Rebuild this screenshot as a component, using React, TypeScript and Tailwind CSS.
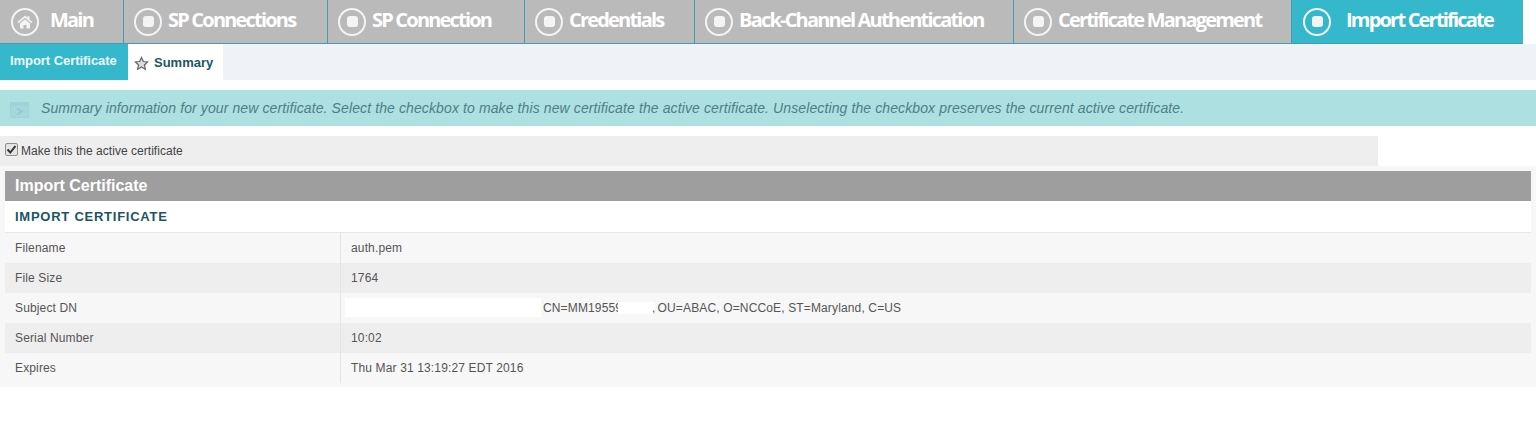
const tabs = [
  { label: "SP Connections", width: "w-[204px]" },
  { label: "SP Connection", width: "w-[197px]" },
  { label: "Credentials", width: "w-[170px]" },
  { label: "Back-Channel Authentication", width: "w-[319px]" },
  { label: "Certificate Management", width: "w-[278px]" },
];

const rows = [
  { name: "Filename", value: "auth.pem" },
  { name: "File Size", value: "1764" },
  { name: "Subject DN", value: "" },
  { name: "Serial Number", value: "10:02" },
  { name: "Expires", value: "Thu Mar 31 13:19:27 EDT 2016" },
];

const StepIcon = () => (
  <span className="w-[28px] h-[28px] shrink-0 rounded-full border-[2px] border-[#f4f4f4] flex items-center justify-center">
    <span className="w-[11px] h-[11px] rounded-[3px] bg-[#f4f4f4]" />
  </span>
);

const NavLabel = ({ children }: { children: string }) => (
  <span className="font-['Open_Sans',sans-serif] text-[20px] font-bold text-white tracking-[-1.8px] whitespace-nowrap pb-[4px]">
    {children}
  </span>
);

export default function App() {
  return (
    <div className="w-[1536px] h-[429px] bg-white font-['Liberation_Sans',Arial,sans-serif] overflow-hidden">
      <div className="flex h-[44px] w-[1523px] border-b border-[#3f9fb0]">
        <div className="w-[124px] bg-[#bababa] border-r border-[#3f9fb0] flex items-center pl-[11px] gap-[11px]">
          <span className="w-[28px] h-[28px] rounded-full border-[2px] border-[#f4f4f4] flex items-center justify-center">
            <svg width="16" height="14" viewBox="0 0 16 14">
              <path d="M8 0.500L0.500 7l1 1.200L8 2.700l6.500 5.500 1-1.200-3-2.600V1.200h-2v1.500z" fill="#f4f4f4" />
              <path d="M3 8.500L8 4.200l5 4.300V13.500H9.500V10h-3v3.500H3z" fill="#f4f4f4" />
            </svg>
          </span>
          <NavLabel>Main</NavLabel>
        </div>
        {tabs.map((tab) => (
          <div key={tab.label} className={`${tab.width} bg-[#bababa] border-r border-[#3f9fb0] flex items-center pl-[10px] gap-[6px]`}>
            <StepIcon />
            <NavLabel>{tab.label}</NavLabel>
          </div>
        ))}
        <div className="flex-1 bg-[#35b8cb] flex items-center pl-[11px] gap-[15px]">
          <StepIcon />
          <NavLabel>Import Certificate</NavLabel>
        </div>
      </div>

      <div className="flex h-[36px] bg-[#eff3f8]">
        <div className="w-[128px] bg-[#35b8cb] text-[#eefafc] text-[13px] font-bold flex items-center pl-[10px] pb-[2px] tracking-[-0.05px]">
          Import Certificate
        </div>
        <div className="w-[95px] bg-white flex items-center pl-[6px] gap-[5px]">
          <svg width="15" height="15" viewBox="0 0 24 24" className="mt-[2px]">
            <path d="M12 2.500l2.900 6.300 6.900.800-5.100 4.700 1.400 6.800-6.100-3.400-6.100 3.400 1.400-6.800L2.200 9.600l6.900-.800z" fill="#dcdcdc" stroke="#666666" strokeWidth="2" />
          </svg>
          <span className="text-[13px] font-bold text-[#1f5562] mt-[1px]">Summary</span>
        </div>
      </div>

      <div className="mt-[10px] h-[36px] bg-[#ade0e0] flex items-center pl-[10px]">
        <svg width="19" height="16" viewBox="0 0 19 16" className="shrink-0 mt-[4px]">
          <rect x="0.500" y="0.500" width="18" height="15" fill="#a4d8dc" stroke="#9fd3d9" />
          <rect x="1" y="1" width="17" height="3" fill="#9fd3d9" />
          <path d="M7 6.500l5 3-5 3" fill="none" stroke="#93c9d2" strokeWidth="1.500" />
        </svg>
        <span className="ml-[12px] text-[14px] italic text-[#4d7f86] tracking-[0.11px] whitespace-nowrap">
          Summary information for your new certificate. Select the checkbox to make this new certificate the active certificate. Unselecting the checkbox preserves the current active certificate.
        </span>
      </div>

      <label className="mt-[10px] w-[1378px] h-[30px] bg-[#eeeeee] flex items-center pl-[5px] gap-[3px] text-[12px] text-[#444] tracking-[0.03px]">
        <span className="w-[13px] h-[13px] -translate-y-[2px] rounded-[2px] border border-[#8f8f8f] bg-[#e4e4e4] flex items-center justify-center">
          <svg width="11" height="11" viewBox="0 0 11 11">
            <path d="M1.500 5.500l2.800 3L9.500 2" fill="none" stroke="#333333" strokeWidth="2" />
          </svg>
        </span>
        <span>Make this the active certificate</span>
      </label>

      <div className="bg-[#f7f7f7] h-[221px] pt-[5px] pl-[5px] pr-[5px]">
        <div className="h-[30px] bg-[#9e9e9e] text-white text-[16px] font-bold flex items-center pl-[10px]">
          Import Certificate
        </div>
        <div className="h-[32px] bg-white border-b border-[#e8e8e8] text-[#1a5566] text-[13px] font-bold tracking-[0.75px] flex items-center pl-[10px]">
          IMPORT CERTIFICATE
        </div>
        {rows.map((row, index) => (
          <div key={row.name} className={`flex h-[30px] text-[12px] text-[#555] tracking-[0.14px] ${index % 2 === 0 ? "bg-[#f7f7f7]" : "bg-[#eeeeee]"}`}>
            <div className="w-[336px] border-r border-[#e4e4e4] flex items-center pl-[10px]">{row.name}</div>
            <div className="flex-1 flex items-center pl-[10px]">
              {row.name === "Subject DN" ? (
                <>
                  <span className="w-[196px] h-[19px] bg-white -ml-[6px] mr-[2px] -mt-[1px]" />
                  <span>CN=MM19559</span>
                  <span className="w-[37px] h-[12px] bg-white -ml-[4px] mt-[-1px]" />
                  <span className="-ml-[3px] mr-[2px]">,</span>
                  <span>OU=ABAC, O=NCCoE, ST=Maryland, C=US</span>
                </>
              ) : (
                row.value
              )}
            </div>
          </div>
        ))}
      </div>
    </div>
  );
}
